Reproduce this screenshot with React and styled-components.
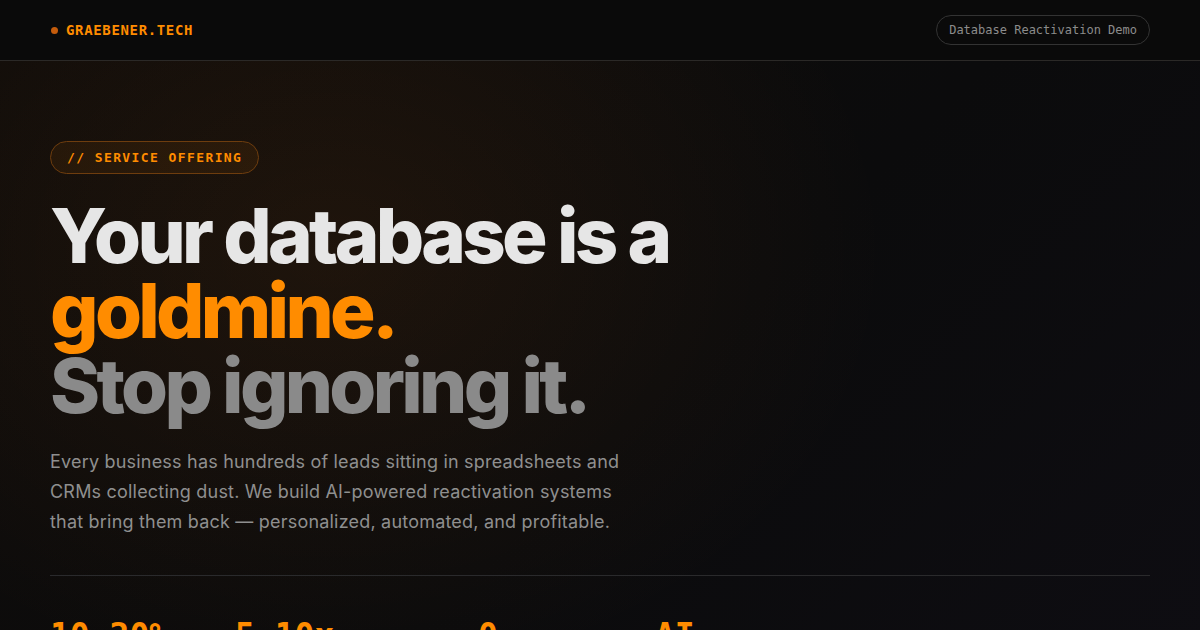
import React from 'react';
import styled, { createGlobalStyle } from 'styled-components';

const GlobalStyle = createGlobalStyle`
    html, body {
        margin: 0;
        padding: 0;
        background: #0a0a0b;
    }
    * {
        box-sizing: border-box;
    }
`;

const mono = `"DejaVu Sans Mono", "Liberation Mono", monospace`;
const sans = `Inter, "Noto Sans", sans-serif`;

const Page = styled.div`
    width: 1200px;
    height: 630px;
    overflow: hidden;
    background: #0a0a0b;
    display: flex;
    flex-flow: column;
`;

const Header = styled.header`
    height: 61px;
    flex-shrink: 0;
    display: flex;
    align-items: center;
    justify-content: space-between;
    padding: 0 50px;
    background: #0a0a0a;
    border-bottom: 1px solid #2b2927;
`;

const Logo = styled.div`
    display: flex;
    align-items: center;
    gap: 8px;
    font-family: ${mono};
    font-weight: 700;
    font-size: 14px;
    letter-spacing: 0.65px;
    color: #ff8c00;

    &:before {
        content: "";
        width: 7px;
        height: 7px;
        border-radius: 50%;
        background: #c45c0c;
        margin-left: 1px;
    }
`;

const DemoPill = styled.div`
    font-family: ${mono};
    font-size: 12px;
    color: #8c8c8c;
    padding: 7px 12px;
    border: 1px solid #333;
    border-radius: 999px;
`;

const Hero = styled.main`
    flex: 1;
    padding: 80px 50px 0;
    background:
        radial-gradient(ellipse 560px 440px at 330px 190px, rgba(255, 130, 20, 0.075), rgba(255, 130, 20, 0) 100%),
        linear-gradient(135deg, #0f0c0a 0%, #0b0b0c 55%, #0e0d12 100%);
    display: flex;
    flex-flow: column;
`;

const Badge = styled.div`
    align-self: flex-start;
    font-family: ${mono};
    font-weight: 700;
    font-size: 13px;
    letter-spacing: 1.4px;
    color: #ff8c00;
    padding: 8px 16px;
    border: 1px solid #6e3d0e;
    border-radius: 999px;
    background: rgba(255, 140, 0, 0.07);
`;

const Headline = styled.h1`
    margin: 24px 0 0;
    font-family: ${sans};
    font-weight: 800;
    font-size: 76px;
    line-height: 75px;
    letter-spacing: -3.7px;
    color: #e6e6e6;
`;

const Line = styled.span`
    display: block;
    color: ${props => props.tone};
`;

const Lead = styled.p`
    margin: 24px 0 0;
    width: 590px;
    font-family: ${sans};
    font-size: 18px;
    line-height: 30px;
    letter-spacing: 0.2px;
    color: #8f8f8f;
`;

const Divider = styled.hr`
    margin: 38px 0 0;
    border: none;
    border-top: 1px solid #2a2a2c;
`;

const Stats = styled.div`
    margin-top: 40px;
    display: grid;
    grid-template-columns: 185px 243px 177px auto;
`;

const Stat = styled.div`
    font-family: ${mono};
    font-weight: 700;
    font-size: 33px;
    line-height: 40px;
    color: #ff8c00;
`;

const stats = ['10–20%', '5–10x', '0', 'AI'];

export default function App() {
    return (
        <Page>
            <GlobalStyle />
            <Header>
                <Logo>GRAEBENER.TECH</Logo>
                <DemoPill>Database Reactivation Demo</DemoPill>
            </Header>
            <Hero>
                <Badge>// SERVICE OFFERING</Badge>
                <Headline>
                    <Line tone="#e6e6e6">Your database is a</Line>
                    <Line tone="#ff8c00">goldmine.</Line>
                    <Line tone="#8a8a8a">Stop ignoring it.</Line>
                </Headline>
                <Lead>
                    Every business has hundreds of leads sitting in spreadsheets and
                    CRMs collecting dust. We build AI-powered reactivation systems
                    that bring them back — personalized, automated, and profitable.
                </Lead>
                <Divider />
                <Stats>
                    {stats.map((s, idx) => (
                        <Stat key={idx}>{s}</Stat>
                    ))}
                </Stats>
            </Hero>
        </Page>
    );
}
